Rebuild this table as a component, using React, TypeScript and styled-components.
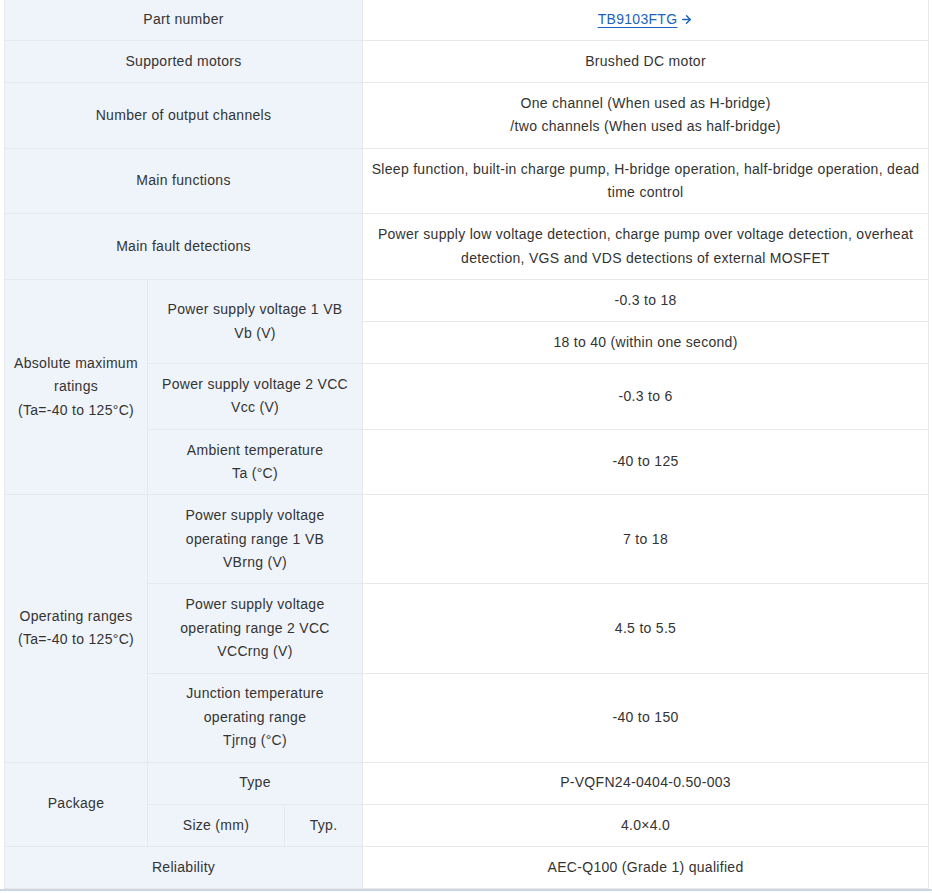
import React from 'react';
import styled, { createGlobalStyle } from 'styled-components';
import { ArrowRight } from 'lucide-react';

const GlobalStyle = createGlobalStyle`
    html, body {
        margin: 0;
        padding: 0;
        background: #ffffff;
    }
    body {
        font-family: "Liberation Sans", Arial, sans-serif;
        color: #333333;
    }
`;

const Wrapper = styled.div`
    padding: 0 4px 0 4px;
    margin-top: -2px;
    border-bottom: 2px solid #c9d8e2;
    width: 924px;
`;

const SpecTable = styled.table`
    width: 924px;
    border-collapse: collapse;
    table-layout: fixed;
    font-size: 14px;
    line-height: 23.5px;
    letter-spacing: 0.3px;
`;

const Head = styled.th`
    background: #eff4fa;
    border: 1px solid #e6e8eb;
    padding: 8.8px 8px;
    font-weight: normal;
    text-align: center;
    vertical-align: middle;
    color: #333333;
`;

const Value = styled.td`
    background: #ffffff;
    border: 1px solid #e6e8eb;
    padding: 8.8px 8px;
    text-align: center;
    vertical-align: middle;
    color: #333333;
`;

const PartLink = styled.a`
    color: #1c5fbd;
    text-decoration: none;
    display: inline-flex;
    align-items: center;
    gap: 3px;
`;

const LinkText = styled.span`
    text-decoration: underline;
    text-underline-offset: 3px;
`;

interface IRow {
    label: React.ReactNode;
    value: React.ReactNode;
}

const simpleRows: IRow[] = [
    { label: 'Supported motors', value: 'Brushed DC motor' },
    {
        label: 'Number of output channels',
        value: <>One channel (When used as H-bridge)<br />/two channels (When used as half-bridge)</>,
    },
    {
        label: 'Main functions',
        value: 'Sleep function, built-in charge pump, H-bridge operation, half-bridge operation, dead time control',
    },
    {
        label: 'Main fault detections',
        value: 'Power supply low voltage detection, charge pump over voltage detection, overheat detection, VGS and VDS detections of external MOSFET',
    },
];

const operating: IRow[] = [
    { label: <>Power supply voltage<br />operating range 1 VB<br />VBrng (V)</>, value: '7 to 18' },
    { label: <>Power supply voltage<br />operating range 2 VCC<br />VCCrng (V)</>, value: '4.5 to 5.5' },
    { label: <>Junction temperature<br />operating range<br />Tjrng (°C)</>, value: '-40 to 150' },
];

export default function App() {
    return (
        <>
            <GlobalStyle />
            <Wrapper>
                <SpecTable>
                    <colgroup>
                        <col style={{ width: 143 }} />
                        <col style={{ width: 137 }} />
                        <col style={{ width: 78 }} />
                        <col style={{ width: 566 }} />
                    </colgroup>
                    <tbody>
                        <tr>
                            <Head colSpan={3}>Part number</Head>
                            <Value>
                                <PartLink href="#">
                                    <LinkText>TB9103FTG</LinkText>
                                    <ArrowRight size={13} strokeWidth={2.6} />
                                </PartLink>
                            </Value>
                        </tr>
                        {simpleRows.map((row, i) => (
                            <tr key={i}>
                                <Head colSpan={3}>{row.label}</Head>
                                <Value>{row.value}</Value>
                            </tr>
                        ))}
                        <tr>
                            <Head rowSpan={4}>Absolute maximum ratings<br />(Ta=-40 to 125°C)</Head>
                            <Head colSpan={2} rowSpan={2}>Power supply voltage 1 VB<br />Vb (V)</Head>
                            <Value>-0.3 to 18</Value>
                        </tr>
                        <tr>
                            <Value>18 to 40 (within one second)</Value>
                        </tr>
                        <tr>
                            <Head colSpan={2}>Power supply voltage 2 VCC<br />Vcc (V)</Head>
                            <Value>-0.3 to 6</Value>
                        </tr>
                        <tr>
                            <Head colSpan={2}>Ambient temperature<br />Ta (°C)</Head>
                            <Value>-40 to 125</Value>
                        </tr>
                        {operating.map((row, i) => (
                            <tr key={'op' + i}>
                                {i === 0 && <Head rowSpan={3}>Operating ranges<br />(Ta=-40 to 125°C)</Head>}
                                <Head colSpan={2}>{row.label}</Head>
                                <Value>{row.value}</Value>
                            </tr>
                        ))}
                        <tr>
                            <Head rowSpan={2}>Package</Head>
                            <Head colSpan={2}>Type</Head>
                            <Value>P-VQFN24-0404-0.50-003</Value>
                        </tr>
                        <tr>
                            <Head>Size (mm)</Head>
                            <Head>Typ.</Head>
                            <Value>4.0×4.0</Value>
                        </tr>
                        <tr>
                            <Head colSpan={3}>Reliability</Head>
                            <Value>AEC-Q100 (Grade 1) qualified</Value>
                        </tr>
                    </tbody>
                </SpecTable>
            </Wrapper>
        </>
    );
}
